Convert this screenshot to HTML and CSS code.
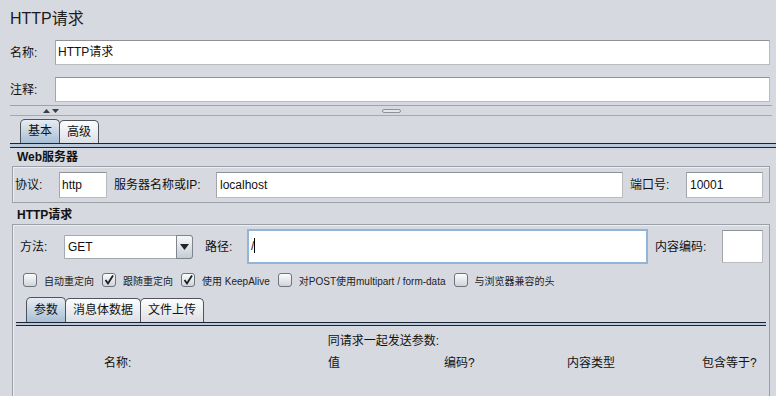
FILE: index.html
```html
<!DOCTYPE html>
<html>
<head>
    <meta charset="utf-8">
    <title>HTTP请求</title>
    <link rel="stylesheet" href="styles.css">
</head>
<body>
    <div class="title">HTTP请求</div>

    <div class="field-row">
        <span class="field-label">名称:</span>
        <div class="text-field">HTTP请求</div>
    </div>
    <div class="field-row comment">
        <span class="field-label">注释:</span>
        <div class="text-field"></div>
    </div>

    <div class="splitter">
        <svg class="arrows" width="16" height="5" viewBox="0 0 16 5">
            <path d="M0 5 L3.5 1 L7 5 Z" fill="#3a3f47"/>
            <path d="M9 1 L16 1 L12.5 5 Z" fill="#3a3f47"/>
        </svg>
        <span class="grip"></span>
        <span></span>
    </div>

    <div class="tabs">
        <span class="tab active">基本</span>
        <span class="tab">高级</span>
    </div>
    <div class="tab-rule"></div>

    <div class="tab-panel">
        <div class="group-title">Web服务器</div>
        <div class="group-box server">
            <span class="lbl" style="width:44px">协议:</span>
            <div class="text-field proto">http</div>
            <span class="lbl gap" style="width:102px">服务器名称或IP:</span>
            <div class="text-field host">localhost</div>
            <span class="lbl gap" style="width:56px">端口号:</span>
            <div class="text-field port">10001</div>
        </div>

        <div class="group-title request-title">HTTP请求</div>
        <div class="group-box request">
            <div class="method-row">
                <span class="lbl" style="width:44px">方法:</span>
                <div class="combo">
                    <span class="combo-value">GET</span>
                    <span class="combo-button">
                        <svg width="9" height="6" viewBox="0 0 9 6"><path d="M0 0 L9 0 L4.5 6 Z" fill="#1f2329"/></svg>
                    </span>
                </div>
                <span class="lbl path-lbl" style="width:42px">路径:</span>
                <div class="text-field path">/<span class="caret"></span></div>
                <span class="lbl gap" style="width:67px">内容编码:</span>
                <div class="text-field encoding"></div>
            </div>

            <div class="check-row">
                <span class="check"><span class="box"></span>自动重定向</span>
                <span class="check"><span class="box checked"><svg width="12" height="12" viewBox="0 0 12 12"><path d="M2.5 6 L5 9.5 L10 1.5" fill="none" stroke="#1b1d21" stroke-width="1.8"/></svg></span>跟随重定向</span>
                <span class="check"><span class="box checked"><svg width="12" height="12" viewBox="0 0 12 12"><path d="M2.5 6 L5 9.5 L10 1.5" fill="none" stroke="#1b1d21" stroke-width="1.8"/></svg></span>使用 KeepAlive</span>
                <span class="check"><span class="box"></span>对POST使用multipart / form-data</span>
                <span class="check"><span class="box"></span>与浏览器兼容的头</span>
            </div>

            <div class="tabs inner">
                <span class="tab active">参数</span>
                <span class="tab">消息体数据</span>
                <span class="tab">文件上传</span>
            </div>
            <div class="tab-rule inner"></div>

            <div class="params">
                <div class="params-caption">同请求一起发送参数:</div>
                <div class="params-head">
                    <span>名称:</span>
                    <span>值</span>
                    <span>编码?</span>
                    <span>内容类型</span>
                    <span>包含等于?</span>
                </div>
            </div>
        </div>
    </div>
</body>
</html>
```

FILE: styles.css
```css
* {
    box-sizing: border-box;
}

body {
    margin: 0;
    height: 396px;
    overflow: hidden;
    background: #d6d9e0;
    font-family: "Liberation Sans", "Noto Sans CJK SC", sans-serif;
    font-size: 12px;
    color: #111;
}

.title {
    padding: 2px 0 0 10px;
    height: 36px;
    line-height: 34px;
    font-size: 16px;
    color: #1c1c1c;
}

.field-row {
    display: flex;
    align-items: center;
    height: 25px;
    margin: 4px 6px 0 10px;
}

.field-row.comment {
    margin-top: 12px;
}

.field-label {
    width: 45px;
    line-height: 16px;
}

.text-field {
    height: 100%;
    background: #fff;
    border: 1px solid #b9bbbf;
    border-top-color: #8f9296;
    border-left-color: #a3a5a9;
    padding-left: 2px;
    line-height: 22px;
    white-space: nowrap;
}

.field-row .text-field {
    flex: 1;
}

.splitter {
    display: grid;
    grid-template-columns: 1fr auto 1fr;
    align-items: center;
    height: 11px;
    margin: 3px 4px 3px 10px;
    border-top: 1px solid #9ea2a9;
    border-bottom: 1px solid #a4a8af;
}

.arrows {
    margin-left: 33px;
    display: block;
}

.grip {
    width: 19px;
    height: 4px;
    border: 1px solid #8d9198;
    border-radius: 3px;
    background: #e4e6ea;
}

.tabs {
    display: flex;
    align-items: flex-end;
    height: 24px;
    padding-left: 20px;
}

.tab {
    height: 23px;
    padding: 0 7px;
    line-height: 22px;
    border: 1px solid #4f545c;
    border-bottom: none;
    border-radius: 5px 5px 0 0;
    background: linear-gradient(#fdfdfd, #dcdfe4);
    margin-right: -1px;
    color: #111;
}

.tab.active {
    height: 24px;
    line-height: 23px;
    background: linear-gradient(#e6ecf2, #a8bfd5);
}

.tab-rule {
    height: 5px;
    margin-left: 10px;
    border-top: 1px solid #1b2434;
    border-bottom: 1px solid #1b2434;
    background: #b9c9da;
}

.tab-panel {
    padding: 0 6px 0 2px;
    margin-left: 10px;
}

.group-title {
    height: 18px;
    line-height: 18px;
    padding-left: 5px;
    font-weight: bold;
}

.group-title.request-title {
    height: 21px;
    padding-top: 3px;
}

.group-box {
    border: 1px solid #9b9fa6;
    box-shadow: inset 1px 1px 0 #eceef1;
}

.server {
    display: flex;
    align-items: center;
    height: 37px;
    padding: 0 6px 0 2px;
}

.server .text-field {
    height: 26px;
    line-height: 24px;
    padding-left: 3px;
}

.lbl {
    flex: none;
    line-height: 16px;
    white-space: nowrap;
}

.lbl.gap {
    margin-left: 7px;
}

.proto {
    width: 48px;
    padding-left: 2px !important;
}

.host {
    flex: 1;
}

.port {
    width: 77px;
}

.request {
    height: 173px;
    border-bottom: none;
    padding: 4px 3px 0 3px;
    overflow: hidden;
}

.method-row {
    display: flex;
    align-items: center;
    height: 35px;
    padding: 0 3px 0 4px;
}

.combo {
    display: flex;
    width: 129px;
    height: 24px;
    background: #fff;
    border: 1px solid #a5a9b0;
    border-radius: 0 3px 3px 0;
}

.combo-value {
    flex: 1;
    padding-left: 3px;
    line-height: 22px;
}

.combo-button {
    width: 17px;
    display: flex;
    align-items: center;
    justify-content: center;
    margin: -1px -1px -1px 0;
    border: 1px solid #7f858e;
    border-radius: 0 3px 3px 0;
    background: linear-gradient(#f6f7f9, #c7ccd4);
}

.path-lbl {
    margin-left: 12px;
}

.path {
    flex: 1;
    height: 35px;
    border: 2px solid #92b4d9;
    line-height: 31px;
    padding-left: 2px;
}

.caret {
    display: inline-block;
    width: 1px;
    height: 15px;
    background: #000;
    vertical-align: -3px;
}

.encoding {
    width: 41px;
    height: 33px;
}

.check-row {
    display: flex;
    align-items: center;
    height: 26px;
    margin-top: 3px;
    padding-left: 7px;
    font-size: 10px;
    color: #222;
}

.check {
    display: flex;
    align-items: center;
    margin-right: 8px;
    white-space: nowrap;
}

.box {
    display: flex;
    align-items: center;
    justify-content: center;
    width: 14px;
    height: 14px;
    margin-right: 7px;
    border: 1px solid #6e747d;
    border-radius: 3px;
    background: linear-gradient(#fcfcfd, #d0d4da);
}

.tabs.inner {
    height: 25px;
    margin-top: 4px;
    padding-left: 10px;
}

.tabs.inner .tab {
    height: 24px;
    line-height: 23px;
}

.tabs.inner .tab.active {
    height: 25px;
    line-height: 24px;
}

.tab-rule.inner {
    height: 4px;
    margin-left: 0;
}

.params-caption {
    padding: 5px 15px 0 0;
    line-height: 20px;
    text-align: center;
}

.params-head {
    display: grid;
    grid-template-columns: 224px 116px 123px 135px auto;
    padding-left: 88px;
    line-height: 24px;
}
```
